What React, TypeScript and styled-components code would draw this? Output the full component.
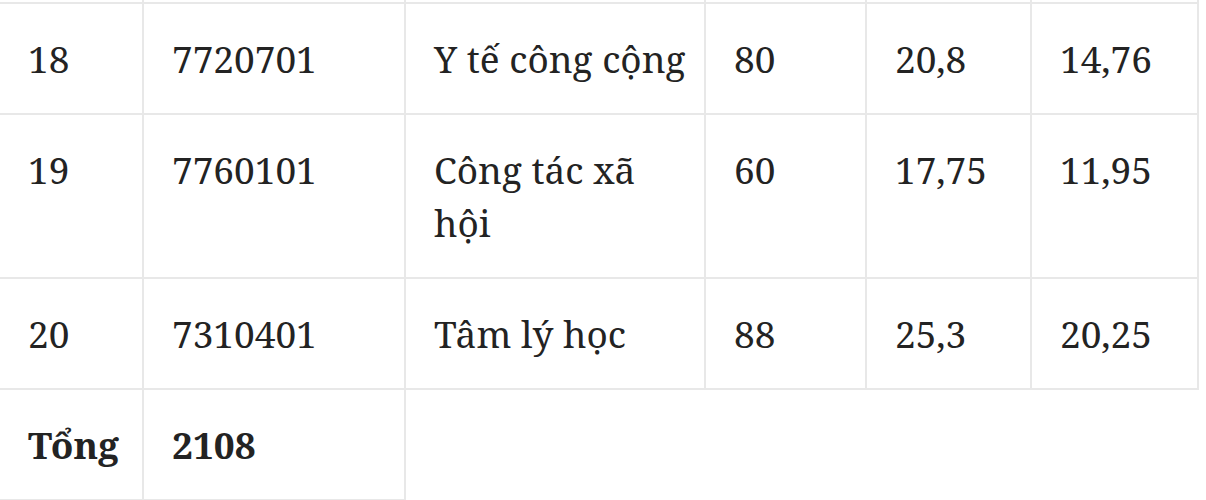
import React from "react";
import styled, { createGlobalStyle } from "styled-components";

const Global = createGlobalStyle`
  html, body { margin: 0; padding: 0; background: #ffffff; }
  body { width: 1206px; height: 500px; overflow: hidden; }
`;

const Frame = styled.div`
  width: 1206px;
  height: 500px;
  overflow: hidden;
  background: #fff;
`;

const Table = styled.table`
  border-collapse: collapse;
  table-layout: fixed;
  width: 1199px;
  margin-left: -2px;
  font-family: "Noto Serif", "DejaVu Serif", "Liberation Serif", serif;
  font-size: 37px;
  line-height: 53px;
  color: #232323;
`;

const Cell = styled.td<{ $bold?: boolean }>`
  border: 2px solid #e8e8e8;
  padding: 27.5px 12px 28.5px 28px;
  vertical-align: top;
  text-align: left;
  font-weight: ${(p) => (p.$bold ? 700 : 400)};
`;

const CutCell = styled.td`
  border: 2px solid #e8e8e8;
  border-top: none;
  padding: 0;
  height: 2px;
  line-height: 0;
  font-size: 0;
`;

const widths = [144, 262, 300, 161, 165, 167];

const rows: string[][] = [
  ["18", "7720701", "Y tế công cộng", "80", "20,8", "14,76"],
  ["19", "7760101", "Công tác xã hội", "60", "17,75", "11,95"],
  ["20", "7310401", "Tâm lý học", "88", "25,3", "20,25"],
];

export default function App() {
  return (
    <Frame>
      <Global />
      <Table>
        <colgroup>
          {widths.map((w, i) => (
            <col key={i} style={{ width: w }} />
          ))}
        </colgroup>
        <tbody>
          <tr>
            {widths.map((_, i) => (
              <CutCell key={i} />
            ))}
          </tr>
          {rows.map((r) => (
            <tr key={r[0]}>
              {r.map((c, i) => (
                <Cell key={i}>{c}</Cell>
              ))}
            </tr>
          ))}
          <tr>
            <Cell $bold>Tổng</Cell>
            <Cell $bold>2108</Cell>
          </tr>
        </tbody>
      </Table>
    </Frame>
  );
}
